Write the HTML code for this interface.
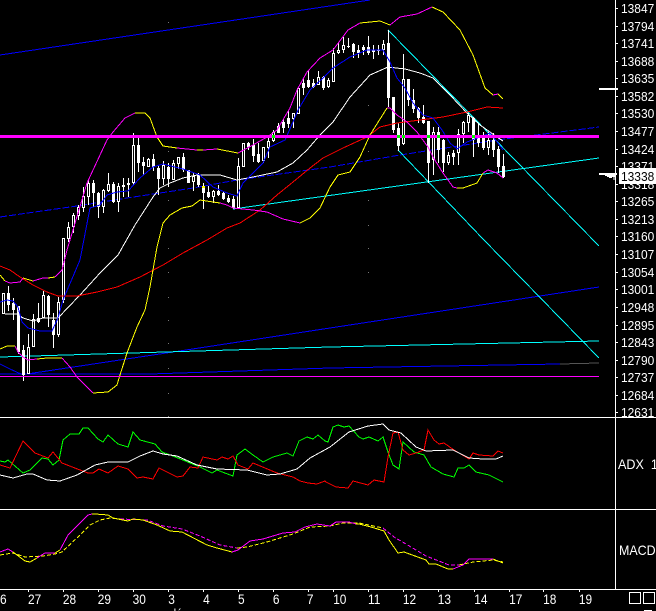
<!DOCTYPE html>
<html><head><meta charset="utf-8"><style>
html,body{margin:0;padding:0;background:#000;width:656px;height:611px;overflow:hidden}
svg{display:block}
text{font-family:"Liberation Sans",sans-serif;font-size:13px;fill:#fff}
polyline,path,line{fill:none}
</style></head><body>
<svg width="656" height="611" viewBox="0 0 656 611" shape-rendering="crispEdges">
<rect width="656" height="611" fill="#000"/>
<!-- grid dots -->
<path stroke="#777" stroke-width="1" d="M168.5 22v1M168.5 151v1M168.5 200v1M168.5 248v1M168.5 272v1M168.5 297v1M168.5 320v1M168.5 343v1M168.5 368v1M168.5 393v1M168.5 416v1M368.5 22v1M368.5 105v1M368.5 151v1M368.5 200v1M368.5 225v1M368.5 248v1M368.5 272v1"/>
<!-- trend lines -->
<g stroke-width="1">
<polyline stroke="#00f" points="0,55 370,0"/>
<polyline stroke="#00f" points="27,374 173,352 330,328 599,287"/>
<polyline stroke="#00f" points="0,374 150,374 330,368 560,364"/>
<polyline stroke="#555" points="560,364 599,363"/>
<polyline stroke="#00f" points="0,364 10,369 23,375"/>
<polyline stroke="#00f" stroke-dasharray="7 2" points="0,217 77,206 127,198 193,188 237,180 330,167 400,155 497,140 599,127"/>
<polyline stroke="#0ff" points="0,357 330,347 599,341"/>
<polyline stroke="#0ff" points="233,209 290,201 599,158"/>
<polyline stroke="#0ff" points="388,30 599,246"/>
<polyline stroke="#0ff" points="398,150 483,239 599,358"/>
</g>
<!-- candle wicks -->
<path stroke="#fff" stroke-width="1" d="M3.5 293V314M8.5 286V311M13.5 298V320M18.5 306V354M23.5 345V381M28.5 334V374M33.5 314V347M38.5 303V323M43.5 291V318M48.5 295V327M53.5 313V348M58.5 297V337M63.5 238V303M68.5 222V242M73.5 213V233M78.5 205V220M83.5 187V212M88.5 180V205M93.5 180V207M98.5 192V218M103.5 189V213M108.5 173V192M113.5 182V203M118.5 183V212M123.5 178V197M128.5 178V197M133.5 133V185M138.5 137V172M143.5 157V175M148.5 158V167M153.5 154V171M158.5 165V195M163.5 161V185M168.5 163V187M173.5 160V180M178.5 157V169M183.5 153V172M188.5 170V183M193.5 173V191M198.5 173V187M203.5 183V209M208.5 186V198M213.5 190V203M218.5 185V196M223.5 192V200M228.5 195V203M233.5 196V209M238.5 158V208M243.5 143V167M248.5 142V150M253.5 139V162M258.5 143V163M263.5 147V163M268.5 135V158M273.5 130V142M278.5 123V133M283.5 119V133M288.5 110V128M293.5 113V128M298.5 87V114M303.5 78V95M308.5 71V88M313.5 79V88M318.5 71V85M323.5 76V90M328.5 78V88M333.5 48V82M338.5 43V54M343.5 37V53M348.5 38V48M353.5 43V58M358.5 45V58M363.5 45V55M368.5 36V55M373.5 45V59M378.5 45V55M383.5 40V55M388.5 30V107M393.5 97V133M398.5 123V151M403.5 54V145M408.5 79V106M413.5 89V113M418.5 107V123M423.5 105V124M428.5 121V183M433.5 127V175M438.5 127V163M443.5 139V172M448.5 152V165M453.5 150V165M458.5 129V165M463.5 121V143M468.5 113V132M473.5 117V157M478.5 123V147M483.5 132V150M488.5 132V155M493.5 133V157M498.5 146V173M503.5 154V178"/>
<!-- candle bodies -->
<path stroke="#fff" stroke-width="3" d="M3.5 293V314M8.5 293V305M13.5 303V310M18.5 306V352M23.5 350V375M28.5 347V374M33.5 319V347M38.5 318V322M43.5 295V318M48.5 296V315M53.5 320V335M58.5 302V335M63.5 238V300M68.5 227V239M73.5 215V227M78.5 207V216M83.5 196V208M88.5 183V197M93.5 183V193M98.5 193V207M103.5 190V207M108.5 184V191M113.5 184V202M118.5 186V202M123.5 185V187M128.5 183V185M133.5 145V183M138.5 145V163M143.5 162V166M148.5 159V167M153.5 159V167M158.5 168V179M163.5 165V179M168.5 167V179M173.5 163V180M178.5 157V164M183.5 157V170M188.5 170V183M193.5 176V182M198.5 175V185M203.5 186V193M208.5 192V197M213.5 191V197M218.5 191V195M223.5 193V199M228.5 198V202M233.5 199V208M238.5 166V208M243.5 143V167M248.5 143V147M253.5 145V156M258.5 154V162M263.5 147V161M268.5 141V148M273.5 132V141M278.5 126V133M283.5 122V128M288.5 118V124M293.5 113V119M298.5 88V114M303.5 83V88M308.5 80V87M313.5 83V87M318.5 77V85M323.5 77V88M328.5 80V87M333.5 53V82M338.5 50V53M343.5 45V50M348.5 46V47M353.5 44V52M358.5 50V53M363.5 47V50M368.5 47V53M373.5 50V52M378.5 50V51M383.5 44V50M388.5 43V98M393.5 97V130M398.5 128V146M403.5 79V144M408.5 79V100M413.5 100V109M418.5 108V118M423.5 117V123M428.5 121V163M433.5 132V160M438.5 132V150M443.5 140V163M448.5 155V163M453.5 153V157M458.5 134V153M463.5 122V134M468.5 115V123M473.5 118V140M478.5 137V143M483.5 137V148M488.5 140V148M493.5 140V150M498.5 149V167M503.5 166V177"/>
<!-- hollow interiors -->
<path stroke="#000" stroke-width="1" d="M3.5 294V313M28.5 348V373M33.5 320V346M43.5 296V317M58.5 303V334M63.5 239V299M68.5 228V238M73.5 216V226M78.5 208V215M83.5 197V207M88.5 184V196M103.5 191V206M108.5 185V190M118.5 187V201M133.5 146V182M148.5 160V166M163.5 166V178M173.5 164V179M178.5 158V163M193.5 177V181M213.5 192V196M238.5 167V207M243.5 144V166M263.5 148V160M268.5 142V147M273.5 133V140M293.5 114V118M298.5 89V113M318.5 78V84M328.5 81V86M333.5 54V81M338.5 51V52M343.5 46V49M383.5 45V49M403.5 80V143M433.5 133V159M448.5 156V162M458.5 135V152M463.5 123V133M468.5 116V122M488.5 141V147"/>
<rect x="202" y="186" width="3" height="2" fill="#ff0"/>
<!-- moving averages -->
<g stroke-width="1">
<polyline stroke="#fff" points="5,314 17,314 23,318 33,321 43,318 58,318 80,295 100,273 118,255 135,225 153,197 160,188 170,183 183,178 197,175 220,175 237,180 253,177 277,172 293,163 307,150 320,135 333,122 350,97 370,75 388,67 405,69 420,73 433,78 450,95 467,113 480,125 497,137 503,141"/>
<polyline stroke="#f00" points="0,266 10,270 20,277 33,285 47,292 58,296 77,296 97,292 117,287 140,277 163,265 183,253 207,240 227,228 240,223 260,210 277,195 293,182 310,168 323,158 343,148 367,137 380,127 397,123 420,120 443,117 467,112 487,107 503,108"/>
<polyline stroke="#00f" points="0,302 7,300 13,301 18,307 22,322 28,328 40,331 52,331 58,318 63,300 80,260 90,208 100,205 107,195 117,192 128,191 140,178 153,167 163,164 183,169 200,175 213,187 227,193 237,196 243,183 263,163 270,147 285,140 293,122 298,110 310,90 323,78 333,68 350,57 367,50 383,50 390,62 397,78 405,88 413,103 423,115 433,118 442,130 450,143 457,149 467,142 480,137 490,133 498,143 503,150"/>
<!-- upper band -->
<g stroke="#f0f">
<polyline points="5,281 10,283 20,282 23,278"/>
<polyline points="33,281 43,278 48,278"/>
<polyline points="55,277 62,270 67,250 87,183 107,140 113,132 125,118 135,113"/>
<polyline points="177,148 197,150"/>
<polyline points="203,150 217,149"/>
<polyline points="238,153 253,145 267,137 277,130 290,108 297,90 307,72 320,58 333,50 348,30 360,23"/>
<polyline points="390,25 400,17 417,14 432,7"/>
<polyline points="493,95 498,94"/>
</g>
<g stroke="#ff0">
<polyline points="0,275 5,281"/>
<polyline points="23,278 33,281"/>
<polyline points="48,278 55,277"/>
<polyline points="135,113 145,113 150,118 157,137 163,146 177,148"/>
<polyline points="197,150 203,150"/>
<polyline points="217,149 238,153"/>
<polyline points="360,23 380,21 390,25"/>
<polyline points="432,7 443,12 460,30 473,55 485,88 493,95"/>
<polyline points="498,94 503,99"/>
</g>
<!-- lower band -->
<g stroke="#f0f">
<polyline points="15,346 18,352 23,357 28,360 37,359"/>
<polyline points="62,358 70,367 77,377 93,393"/>
<polyline points="220,203 227,205 233,208 253,210 267,212 283,219 300,223"/>
<polyline points="387,108 390,108 397,115 407,122 417,132 428,147 433,157 443,173 453,187 457,188"/>
<polyline points="483,173 488,170 497,173 503,178"/>
</g>
<g stroke="#ff0">
<polyline points="0,349 7,346 15,346"/>
<polyline points="37,359 47,358 62,358"/>
<polyline points="93,393 108,392 117,385 120,375 127,353 137,327 145,310 150,287 157,247 163,223 170,215 182,208 192,206 200,200 213,202 220,203"/>
<polyline points="300,223 310,218 320,208 330,187 338,175 350,172 360,157 370,135 387,108"/>
<polyline points="457,188 463,188 477,183 483,173"/>
</g>
</g>
<!-- horizontal levels -->
<rect x="0" y="135" width="599" height="3" fill="#f0f"/>
<rect x="0" y="376" width="599" height="1" fill="#f0f"/>
<g fill="#0f0">
<rect x="397" y="135" width="3" height="3"/><rect x="402" y="135" width="3" height="3"/><rect x="427" y="135" width="3" height="3"/><rect x="437" y="135" width="3" height="3"/><rect x="472" y="135" width="3" height="3"/><rect x="272" y="135" width="3" height="3"/>
</g>
<!-- frame -->
<g fill="#fff">
<rect x="0" y="417" width="656" height="1"/>
<rect x="0" y="509" width="656" height="1"/>
<rect x="0" y="589" width="656" height="1"/>
<rect x="615" y="0" width="1" height="589"/>
</g>
<!-- price ticks -->
<path stroke="#fff" stroke-width="1" d="M615 8.5h3M615 26.5h3M615 43.5h3M615 61.5h3M615 78.5h3M615 96.5h3M615 113.5h3M615 131.5h3M615 149.5h3M615 166.5h3M615 184.5h3M615 201.5h3M615 219.5h3M615 236.5h3M615 254.5h3M615 272.5h3M615 289.5h3M615 307.5h3M615 325.5h3M615 342.5h3M615 360.5h3M615 377.5h3M615 395.5h3M615 412.5h3"/>
<g transform="translate(621,0) scale(.92,1)">
<text y="13">13847</text><text y="31">13794</text><text y="48">13741</text><text y="66">13688</text><text y="83">13635</text><text y="101">13582</text><text y="118">13530</text><text y="136">13477</text><text y="154">13424</text><text y="171">13371</text><text y="189">13318</text><text y="206">13265</text><text y="224">13213</text><text y="241">13160</text><text y="259">13107</text><text y="277">13054</text><text y="294">13001</text><text y="312">12948</text><text y="330">12895</text><text y="347">12843</text><text y="365">12790</text><text y="382">12737</text><text y="400">12684</text><text y="417">12631</text>
</g>
<!-- current price -->
<rect x="599" y="88" width="19" height="2" fill="#fff"/>
<rect x="599" y="173" width="18" height="2" fill="#fff"/>
<path stroke="#fff" stroke-width="1" d="M605 175.5h11M607 176.5h9M609 177.5h3M614 175v5"/>
<rect x="619" y="168" width="37" height="16" fill="#fff"/>
<text x="621" y="181" transform="translate(621,0) scale(.92,1) translate(-621,0)" style="fill:#000">13338</text>
<!-- ADX -->
<g stroke-width="1">
<polyline stroke="#0f0" points="0,461 5,462 8,460 23,473 30,470 42,458 48,459 53,465 59,460 63,440 70,434 79,434 83,428 88,428 98,439 103,442 108,435 118,444 128,447 133,432 140,440 155,444 162,452 173,456 200,467 212,473 217,470 233,476 237,455 245,449 253,455 263,462 273,457 287,453 293,456 299,441 307,437 313,439 318,435 325,441 328,442 333,427 338,425 344,427 349,426 359,437 363,439 369,437 378,441 383,437 388,452 393,465 399,469 403,442 414,452 424,455 431,467 443,474 454,477 458,468 464,468 469,465 476,472 489,475 503,482"/>
<polyline stroke="#f00" points="0,465 10,468 23,441 35,453 48,458 53,452 62,463 80,470 88,473 93,473 99,469 108,473 118,466 128,469 137,478 143,477 153,479 159,468 177,477 183,476 190,467 198,468 203,457 217,460 222,457 228,459 233,456 238,465 248,469 253,463 277,473 293,477 300,481 308,483 317,484 325,481 326,482 336,487 348,488 353,481 368,485 374,480 384,482 388,457 393,433 398,432 403,450 409,455 416,453 424,450 428,430 434,440 439,444 444,443 454,450 469,459 473,453 479,455 493,456 498,451 503,453"/>
<polyline stroke="#fff" points="0,475 13,478 27,474 33,474 47,480 60,481 77,475 95,465 108,462 128,462 140,456 153,451 163,454 177,456 197,465 217,469 247,470 267,475 280,474 297,469 310,458 330,447 349,432 368,426 383,424 389,430 401,433 416,447 426,451 453,450 469,458 483,459 496,459 503,456"/>
</g>
<!-- MACD -->
<g stroke-width="1">
<g stroke="#ff0" stroke-dasharray="4 2">
<polyline points="0,555 13,553 25,557 43,556 55,554 62,552 80,535 90,525 100,520 110,518 120,519"/>
<polyline points="237,548 247,547 267,542 293,534 310,527 330,526 343,523 359,523 383,528"/>
<polyline points="459,565 473,562 493,560 503,562"/>
</g>
<g stroke="#f0f" stroke-dasharray="4 2">
<polyline points="120,519 147,520 163,526 182,529 200,536 220,545 237,548"/>
<polyline points="383,528 394,537 406,544 426,556 449,565 459,565"/>
</g>
<g stroke="#f0f">
<polyline points="0,552 8,549 13,552"/>
<polyline points="37,558 45,553 55,553"/>
<polyline points="60,550 68,535 80,523 88,515 92,514"/>
<polyline points="232,552 238,550 250,541 263,539 283,533 295,532 305,527 317,524 330,526 336,522 349,522 356,524"/>
<polyline points="453,569 463,565 469,559 493,559"/>
</g>
<g stroke="#ff0">
<polyline points="13,552 25,561 30,562 37,558"/>
<polyline points="55,553 60,550"/>
<polyline points="92,514 95,514 108,515 113,518 128,521 133,519 143,520 157,525 170,531 182,532 207,545 217,548 232,552"/>
<polyline points="356,524 359,524 371,527 384,531 389,540 398,553 404,552 426,560 429,564 436,564 448,569 453,569"/>
<polyline points="493,559 503,563"/>
</g>
</g>
<!-- side labels -->
<text x="618" y="469" style="font-size:14px" transform="translate(618,0) scale(.9,1) translate(-618,0)">ADX&#160;&#160;1</text>
<text x="619" y="555" style="font-size:14px" transform="translate(619,0) scale(.89,1) translate(-619,0)">MACD</text>
<!-- time ticks -->
<path stroke="#fff" stroke-width="1" d="M28.5 589v3M63.5 589v3M98.5 589v3M133.5 589v3M168.5 589v3M203.5 589v3M238.5 589v3M273.5 589v3M308.5 589v3M333.5 589v3M368.5 589v3M403.5 589v3M438.5 589v3M474.5 589v3M509.5 589v3M543.5 589v3M579.5 589v3"/>
<g transform="scale(.85,1)" style="font-size:14px">
<text style="font-size:14px" x="0" y="604">6</text><text style="font-size:14px" x="33" y="604">27</text><text style="font-size:14px" x="74" y="604">28</text><text style="font-size:14px" x="115" y="604">29</text><text style="font-size:14px" x="156" y="604">30</text><text style="font-size:14px" x="198" y="604">3</text><text style="font-size:14px" x="239" y="604">4</text><text style="font-size:14px" x="280" y="604">5</text><text style="font-size:14px" x="321" y="604">6</text><text style="font-size:14px" x="361" y="604">7</text><text style="font-size:14px" x="392" y="604">10</text><text style="font-size:14px" x="433" y="604">11</text><text style="font-size:14px" x="474" y="604">12</text><text style="font-size:14px" x="515" y="604">13</text><text style="font-size:14px" x="558" y="604">14</text><text style="font-size:14px" x="599" y="604">17</text><text style="font-size:14px" x="639" y="604">18</text><text style="font-size:14px" x="681" y="604">19</text>
<text x="200" y="618">déc</text>
</g>
<rect x="629.5" y="592.5" width="11" height="11" fill="none" stroke="#fff"/>
<rect x="643.5" y="592.5" width="11" height="11" fill="none" stroke="#fff"/>
<rect x="644" y="610" width="8" height="1" fill="#fff"/>
</svg>
</body></html>
